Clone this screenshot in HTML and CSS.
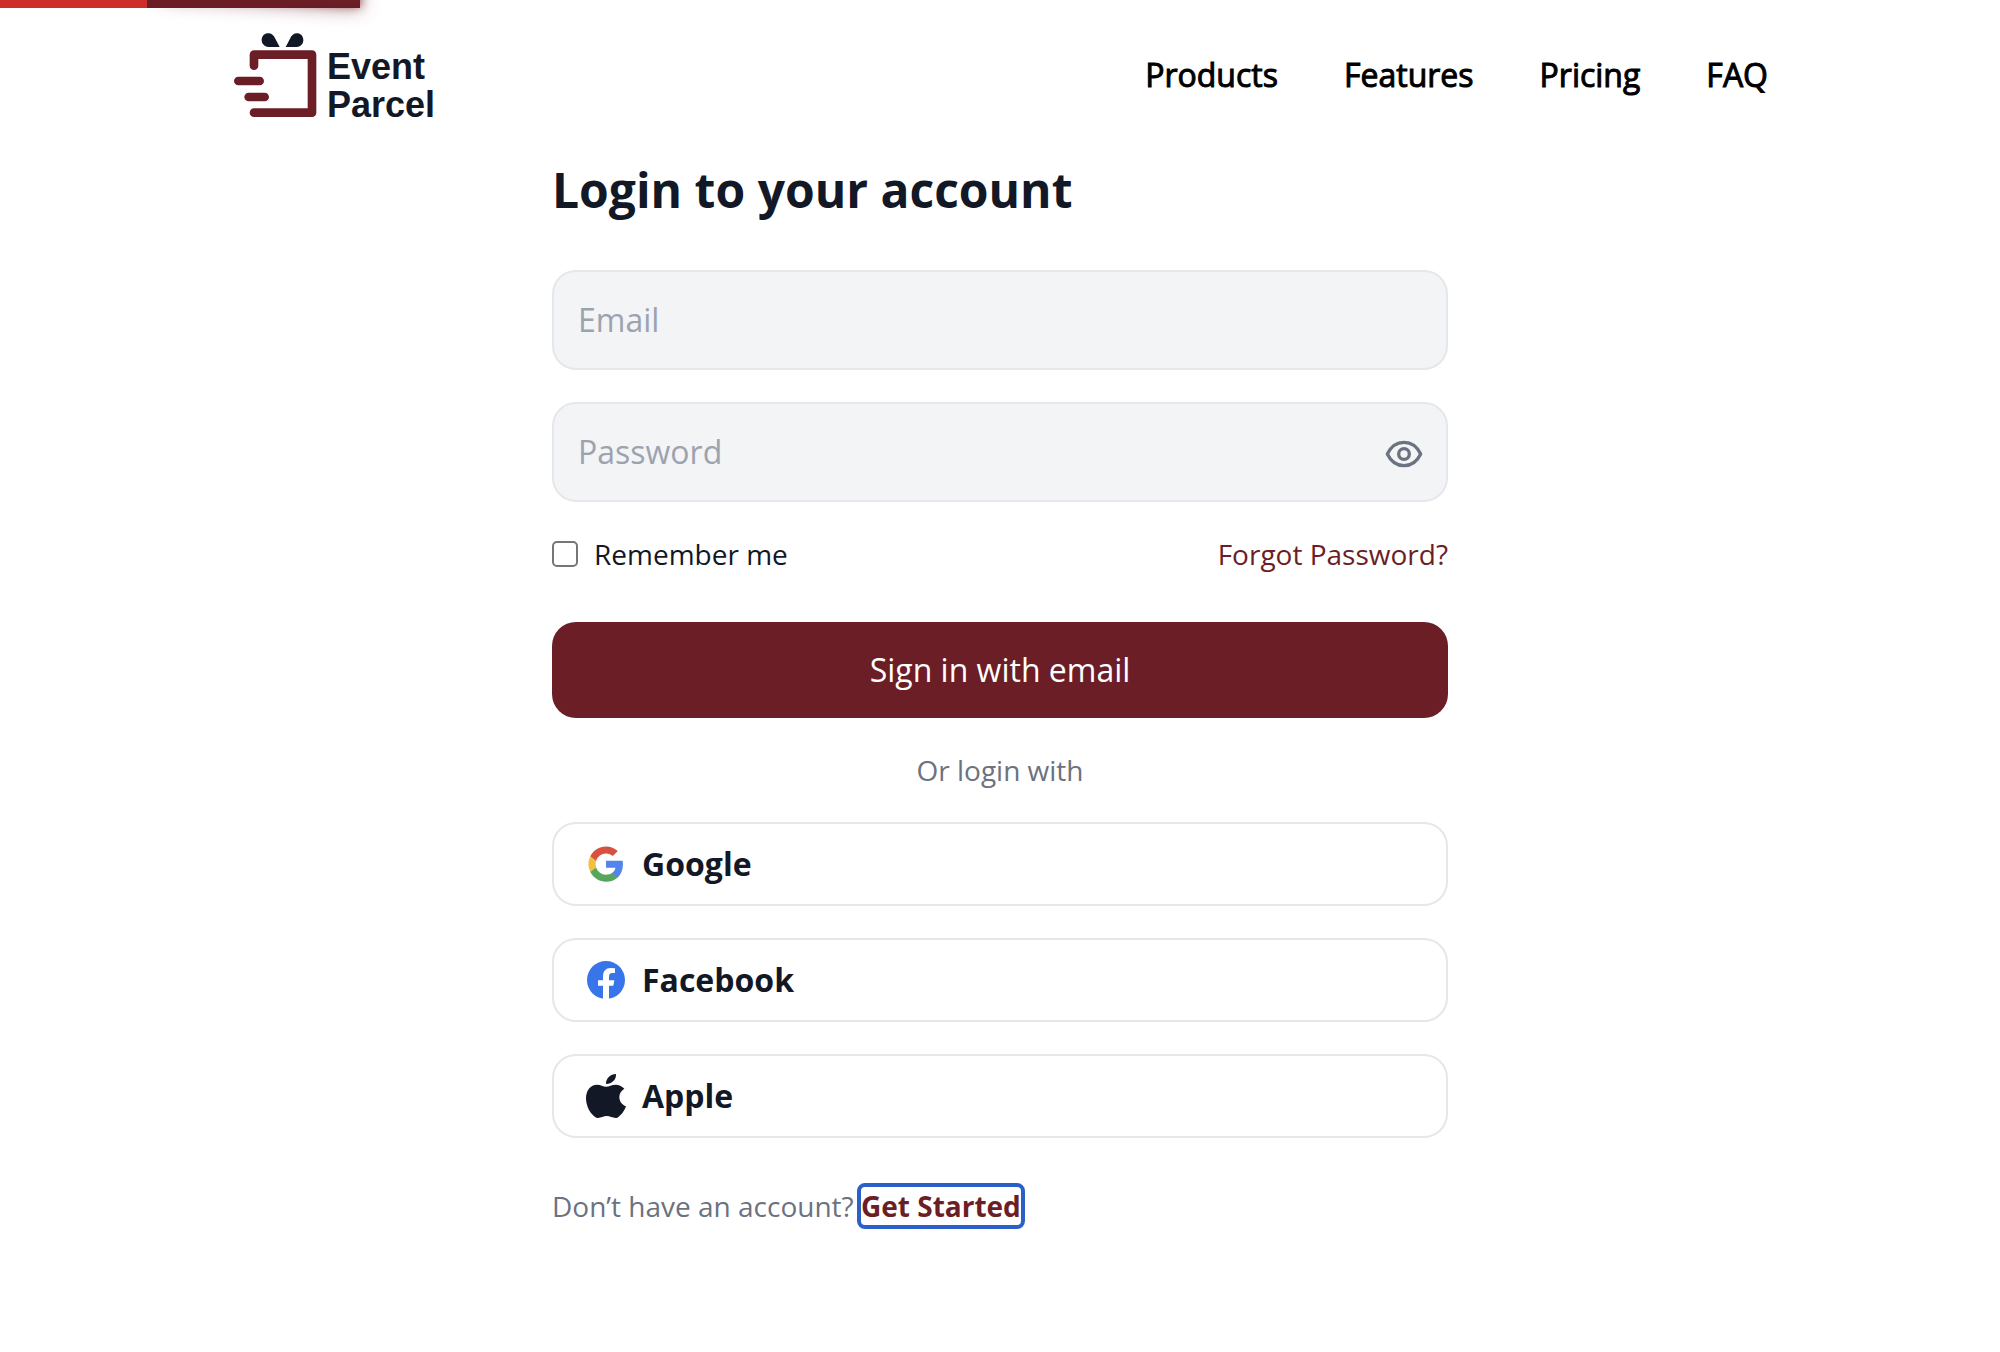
FILE: index.html
```html
<!DOCTYPE html>
<html lang="en">
<head>
<meta charset="utf-8">
<meta name="viewport" content="width=device-width, initial-scale=1">
<title>Login | Event Parcel</title>
<link rel="stylesheet" href="styles.css">
</head>
<body>
<div class="progress" aria-hidden="true">
  <div class="progress-bar"><span class="progress-peg"></span></div>
  <div class="progress-scroll"></div>
</div>
<header class="site-header">
  <a class="logo" href="#">
    <svg class="logo-mark" viewBox="36 36 255 264" aria-hidden="true">
      <g fill="#121826">
        <path d="M179 81H146C132 79 125 71 125 60C125 48 134 40 145 40C155 40 161 46 166 56Z"/>
        <path d="M197 81H230C244 79 250 71 250 60C250 48 241 40 231 40C221 40 215 46 210 56Z"/>
      </g>
      <g fill="none" stroke="#6b1e26" stroke-width="26" stroke-linecap="round" stroke-linejoin="round">
        <path d="M102 137V104H276V278H102"/>
        <path d="M55 183H119M86 231H134"/>
      </g>
    </svg>
    <span class="logo-name">Event<br>Parcel</span>
  </a>
  <nav class="site-nav" aria-label="Main">
    <a href="#">Products</a>
    <a href="#">Features</a>
    <a href="#">Pricing</a>
    <a href="#">FAQ</a>
  </nav>
</header>
<main class="login">
  <h1 class="login-title">Login to your account</h1>
  <form class="login-form">
    <input class="field" type="email" placeholder="Email" aria-label="Email">
    <div class="password">
      <input class="field" type="password" placeholder="Password" aria-label="Password">
      <button class="reveal" type="button" aria-label="Show password">
        <svg viewBox="552 132 120 120" aria-hidden="true">
          <g fill="none" stroke="#6b7280" stroke-width="10" stroke-linejoin="round">
            <path d="M562 192C573 169 591 157 612 157S651 169 662 192C651 215 633 227 612 227S573 215 562 192Z"/>
            <circle cx="612" cy="192" r="16"/>
          </g>
        </svg>
      </button>
    </div>
    <div class="options">
      <label class="remember"><input class="check" type="checkbox">Remember me</label>
      <a class="forgot" href="#">Forgot Password?</a>
    </div>
    <button class="submit" type="submit">Sign in with email</button>
    <p class="divider">Or login with</p>
    <button class="provider" type="button">
      <svg class="provider-icon" viewBox="0 0 24 24" aria-hidden="true">
        <g transform="translate(.5 .5) scale(.96)">
          <path fill="#5383ec" d="M22.56 12.25c0-.78-.07-1.53-.2-2.25H12v4.26h5.92c-.26 1.37-1.04 2.53-2.21 3.31v2.77h3.57c2.08-1.92 3.28-4.74 3.28-8.09z"/>
          <path fill="#58a55c" d="M12 23c2.97 0 5.46-.98 7.28-2.66l-3.57-2.77c-.98.66-2.23 1.06-3.71 1.06-2.86 0-5.29-1.93-6.16-4.53H2.18v2.84C3.99 20.53 7.7 23 12 23z"/>
          <path fill="#f1bf42" d="M5.84 14.09c-.22-.66-.35-1.36-.35-2.09s.13-1.43.35-2.09V7.07H2.18C1.43 8.55 1 10.22 1 12s.43 3.45 1.18 4.93z"/>
          <path fill="#d85140" d="M12 5.38c1.62 0 3.06.56 4.21 1.64l3.15-3.15C17.45 2.09 14.97 1 12 1 7.7 1 3.99 3.47 2.18 7.07l3.66 2.84c.87-2.6 3.3-4.53 6.16-4.53z"/>
        </g>
      </svg>
      Google
    </button>
    <button class="provider" type="button">
      <svg class="provider-icon" viewBox="138 450 120 120" aria-hidden="true">
        <circle cx="198" cy="510" r="57" fill="#3875ea"/>
        <path fill="#fff" d="M189 568V527H174V511H189V499C189 483 198 474 212 474Q219 474 225 475V489H217C209 489 207 494 207 500V511H223L220 527H207V568Z"/>
      </svg>
      Facebook
    </button>
    <button class="provider" type="button">
      <svg class="provider-icon" viewBox="138 108 120 120" aria-hidden="true">
        <g fill="#121826">
          <path d="M228 102C229 119 216 132 198 132C197 116 211 102 228 102Z"/>
          <path d="M198 140C208 140 215 134 227 134C238 134 247 139 253 146C243 152 238 161 238 171C238 184 246 194 258 199C253 213 243 227 232 233C221 236 211 228 200 228C189 228 180 236 169 233C151 224 138 198 138 175C138 151 152 134 171 134C182 134 189 140 198 140Z"/>
        </g>
      </svg>
      Apple
    </button>
  </form>
  <p class="signup">Don’t have an account? <a class="signup-link" href="#">Get Started</a></p>
</main>
</body>
</html>
```
FILE: styles.css
```css
* {
  box-sizing: border-box;
}

body {
  margin: 0;
  background: #fff;
  color: #121826;
  font-family: "Open Sans", "Noto Sans", sans-serif;
  font-size: 32px;
  line-height: 48px;
}

a {
  color: inherit;
  text-decoration: none;
}

button,
input {
  font: inherit;
  color: inherit;
}

/* Page loading bar, over the header */
.progress {
  position: absolute;
  top: 0;
  left: 0;
  width: 100%;
  height: 8px;
}

.progress-bar,
.progress-scroll {
  position: absolute;
  top: 0;
  left: 0;
  height: 8px;
}

.progress-bar {
  width: 18%;
  background: #6b1e26;
}

.progress-scroll {
  width: 147px;
  background: #cc2e29;
}

.progress-peg {
  position: absolute;
  right: 0;
  width: 200px;
  height: 100%;
  box-shadow: 0 0 20px #6b1e26, 0 0 10px #6b1e26;
  transform: rotate(3deg) translate(0, -8px);
}

.site-header {
  display: flex;
  align-items: center;
  justify-content: space-between;
  max-width: 1536px;
  margin: 0 auto;
  padding: 32px 0;
}

.logo {
  display: flex;
  gap: 10px;
}

.logo-mark {
  width: 85px;
  height: 88px;
}

.logo-name {
  height: 88px;
  padding-top: 16px;
  font-family: "Liberation Sans", Arial, sans-serif;
  font-size: 36px;
  font-weight: 700;
  line-height: 38px;
}

.site-nav {
  display: flex;
  gap: 66px;
  padding-bottom: 2px;
  color: #000;
  font-weight: 500;
  -webkit-text-stroke: 1px #000;
}

.login {
  max-width: 896px;
  margin: 0 auto;
  padding-bottom: 48px;
}

.login-title {
  margin: 0 0 42px;
  font-size: 48px;
  font-weight: 700;
  line-height: 76px;
}

.login-form {
  display: flex;
  flex-direction: column;
  gap: 32px;
}

.field {
  display: block;
  width: 100%;
  height: 100px;
  padding: 0 24px 2px;
  border: 2px solid #e5e7eb;
  border-radius: 24px;
  background: #f3f4f6;
}

.field::placeholder {
  color: #9ca3af;
  opacity: 1;
}

.password {
  position: relative;
}

.reveal {
  position: absolute;
  top: 32px;
  right: 24px;
  width: 40px;
  height: 40px;
  padding: 0;
  border: 0;
  background: none;
}

.reveal svg {
  display: block;
}

.options {
  display: flex;
  justify-content: space-between;
  margin-bottom: 16px;
  font-size: 28px;
  line-height: 40px;
}

.remember {
  display: flex;
  align-items: center;
  gap: 16px;
}

.check {
  width: 26px;
  height: 26px;
  margin: 0;
  appearance: none;
  border: 2px solid #767676;
  border-radius: 5px;
  background: #fff;
}

.check:checked {
  background: #6b1e26;
}

.forgot {
  color: #6b1e26;
}

.submit {
  height: 96px;
  border: 0;
  border-radius: 24px;
  background: #6b1e26;
  color: #fff;
}

.divider {
  margin: 0;
  color: #6b7280;
  font-size: 28px;
  line-height: 40px;
  text-align: center;
}

.provider {
  display: flex;
  align-items: center;
  gap: 16px;
  height: 84px;
  padding: 0 32px;
  border: 2px solid #e5e7eb;
  border-radius: 24px;
  background: #fff;
  font-weight: 700;
}

.provider-icon {
  width: 40px;
  height: 40px;
  overflow: visible;
}

.signup {
  margin: 48px 0 0;
  color: #6b7280;
  font-size: 28px;
  line-height: 40px;
}

.signup-link {
  border-radius: 4px;
  outline: 4px solid #2a60c8;
  color: #6b1e26;
  font-weight: 700;
}
```
